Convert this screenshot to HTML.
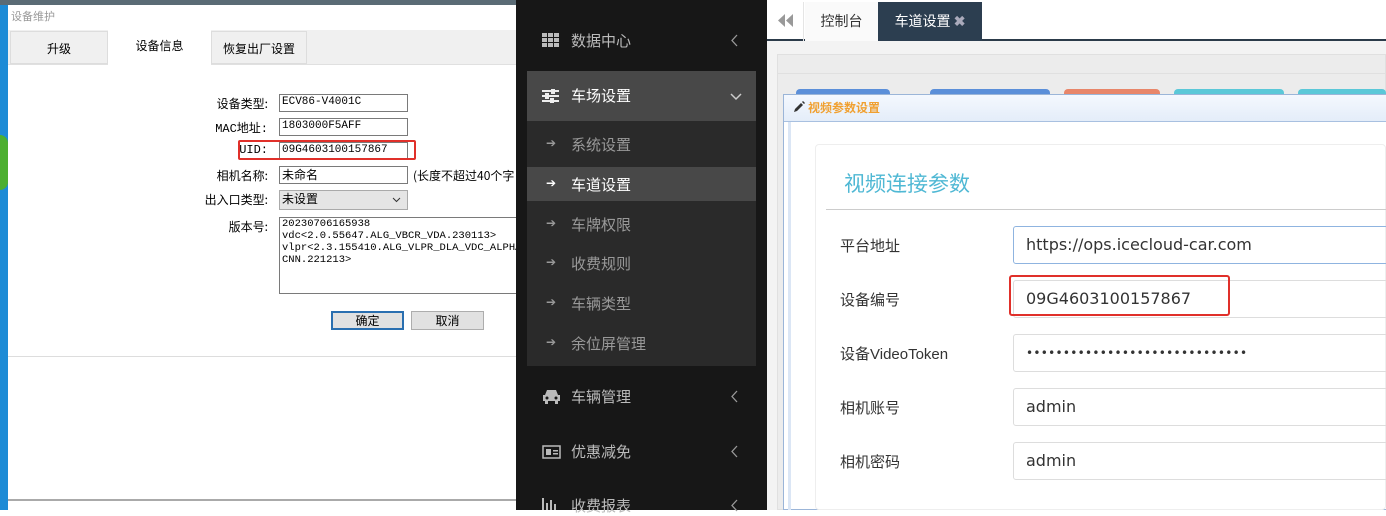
<!DOCTYPE html>
<html><head><meta charset="utf-8"><style>
*{margin:0;padding:0;box-sizing:border-box}
body{width:1386px;height:510px;overflow:hidden;position:relative;background:#fff;font-family:"Liberation Sans","Noto Sans CJK SC",sans-serif}
.a{position:absolute}
.dl{font-family:"Noto Sans CJK SC","Liberation Sans",sans-serif;font-size:12px;color:#000}
.lab{right:0;text-align:right;width:120px}
.inp{border:1px solid #7a7a7a;background:#fff;font-family:"Liberation Mono","Noto Sans CJK SC",monospace;font-size:11px;padding-left:2px;line-height:15px;height:18px}
.sb{color:#bbb;font-size:15px;font-family:"Noto Sans CJK SC",sans-serif}
.sub{color:#999;font-size:15px;font-family:"Noto Sans CJK SC",sans-serif}
.fl{font-size:15px;color:#333;font-family:"Liberation Sans","Noto Sans CJK SC",sans-serif}
.fi{border:1px solid #ddd;border-radius:3px;height:38px;width:380px;font-size:16px;color:#333;padding-left:12px;line-height:36px;font-family:"DejaVu Sans","Liberation Sans",sans-serif}
</style></head><body>
<div class="a" style="left:0;top:0;width:8px;height:510px;background:#1d8bd6"></div>
<div class="a" style="left:0;top:135px;width:8px;height:55px;background:#4caf30;border-radius:0 20px 20px 0"></div>
<div class="a" style="left:0;top:0;width:516px;height:5px;background:#5a6b75"></div>
<div class="a" style="left:8px;top:5px;width:508px;height:496px;background:#fff;border-bottom:2px solid #aaa">
 <div class="a dl" style="left:3px;top:3px;color:#999;font-size:11px">设备维护</div>
 <div class="a" style="left:0;top:25px;width:508px;height:35px;background:#f0f0f0;border-bottom:1px solid #e0e0e0"></div>
 <div class="a dl" style="left:2px;top:26px;width:98px;height:33px;border:1px solid #ddd;text-align:center;line-height:33px;background:#f0f0f0">升级</div>
 <div class="a dl" style="left:100px;top:24px;width:103px;height:37px;background:#fff;text-align:center;line-height:33px">设备信息</div>
 <div class="a dl" style="left:203px;top:26px;width:96px;height:33px;border:1px solid #ddd;text-align:center;line-height:33px;background:#f0f0f0">恢复出厂设置</div>
 <div class="a" style="left:0;top:351px;width:508px;height:1px;background:#ddd"></div>
</div>
<div class="a dl lab" style="left:148px;top:95px">设备类型:</div>
<div class="a dl lab" style="left:148px;top:119px;font-family:'Liberation Mono','Noto Sans CJK SC',monospace">MAC地址:</div>
<div class="a dl lab" style="left:148px;top:143px;font-family:'Liberation Mono','Noto Sans CJK SC',monospace">UID:</div>
<div class="a dl lab" style="left:148px;top:167px">相机名称:</div>
<div class="a dl lab" style="left:148px;top:191px">出入口类型:</div>
<div class="a dl lab" style="left:148px;top:218px">版本号:</div>
<div class="a inp" style="left:279px;top:94px;width:129px">ECV86-V4001C</div>
<div class="a inp" style="left:279px;top:118px;width:129px">1803000F5AFF</div>
<div class="a inp" style="left:279px;top:142px;width:129px">09G4603100157867</div>
<div class="a" style="left:238px;top:140px;width:178px;height:20px;border:2px solid #e0302a;border-radius:2px"></div>
<div class="a inp" style="left:279px;top:166px;width:129px;font-family:'Noto Sans CJK SC',sans-serif;font-size:12px">未命名</div>
<div class="a dl" style="left:413px;top:167px">(长度不超过40个字</div>
<div class="a inp" style="left:279px;top:190px;width:129px;height:20px;background:#e5e5e5;border-color:#aaa;font-family:'Noto Sans CJK SC',sans-serif;font-size:12px">未设置<svg style="position:absolute;right:6px;top:6px" width="9" height="6" stroke="#333" fill="none"><path d="M1 1L4.5 4.5L8 1"/></svg></div>
<div class="a inp" style="left:279px;top:217px;width:240px;height:77px;font-size:10.5px;line-height:12px;white-space:pre">20230706165938
vdc&lt;2.0.55647.ALG_VBCR_VDA.230113&gt;
vlpr&lt;2.3.155410.ALG_VLPR_DLA_VDC_ALPHA_
CNN.221213&gt;</div>
<div class="a dl" style="left:331px;top:311px;width:73px;height:19px;border:2px solid #2a6fb0;background:#e1e1e1;text-align:center;line-height:15px">确定</div>
<div class="a dl" style="left:411px;top:311px;width:73px;height:19px;border:1px solid #adadad;background:#e1e1e1;text-align:center;line-height:17px">取消</div>
<!-- sidebar -->
<div class="a" style="left:516px;top:0;width:251px;height:510px;background:#171717"></div>
<div class="a" style="left:527px;top:71px;width:229px;height:50px;background:#484848"></div>
<div class="a" style="left:527px;top:121px;width:229px;height:245px;background:#2a2a2a"></div>
<div class="a" style="left:527px;top:167px;width:229px;height:34px;background:#484848"></div>
<svg class="a" style="left:542px;top:33px" width="17" height="14" fill="#bbb"><rect x="0" y="0" width="5" height="4"/><rect x="6" y="0" width="5" height="4"/><rect x="12" y="0" width="5" height="4"/><rect x="0" y="5" width="5" height="4"/><rect x="6" y="5" width="5" height="4"/><rect x="12" y="5" width="5" height="4"/><rect x="0" y="10" width="5" height="4"/><rect x="6" y="10" width="5" height="4"/><rect x="12" y="10" width="5" height="4"/></svg>
<div class="a sb" style="left:571px;top:30px">数据中心</div>
<svg class="a" style="left:731px;top:34px" width="7" height="13" stroke="#999" stroke-width="1.3" fill="none"><path d="M6 1L1 6.5L6 12"/></svg>
<svg class="a" style="left:542px;top:89px" width="17" height="14" stroke="#eee" stroke-width="2" fill="#eee"><line x1="0" y1="2" x2="17" y2="2"/><line x1="0" y1="7" x2="17" y2="7"/><line x1="0" y1="12" x2="17" y2="12"/><rect x="10" y="0" width="2" height="4"/><rect x="4" y="5" width="2" height="4"/><rect x="9" y="10" width="2" height="4"/></svg>
<div class="a sb" style="left:571px;top:85px;color:#fff">车场设置</div>
<svg class="a" style="left:730px;top:93px" width="12" height="8" stroke="#ccc" stroke-width="1.5" fill="none"><path d="M1 1L6 6L11 1"/></svg>
<div class="a sub" style="left:546px;top:134px;font-size:12px">➔</div><div class="a sub" style="left:571px;top:134px">系统设置</div>
<div class="a sub" style="left:546px;top:174px;font-size:12px;color:#fff">➔</div><div class="a sub" style="left:571px;top:174px;color:#fff">车道设置</div>
<div class="a sub" style="left:546px;top:214px;font-size:12px">➔</div><div class="a sub" style="left:571px;top:214px">车牌权限</div>
<div class="a sub" style="left:546px;top:253px;font-size:12px">➔</div><div class="a sub" style="left:571px;top:253px">收费规则</div>
<div class="a sub" style="left:546px;top:293px;font-size:12px">➔</div><div class="a sub" style="left:571px;top:293px">车辆类型</div>
<div class="a sub" style="left:546px;top:333px;font-size:12px">➔</div><div class="a sub" style="left:571px;top:333px">余位屏管理</div>
<svg class="a" style="left:542px;top:389px" width="19" height="15" fill="#bbb"><path d="M3 6L5 1H14L16 6H18V12H16V15H13V12H6V15H3V12H1V6Z"/><circle cx="5" cy="9" r="1.5" fill="#171717"/><circle cx="14" cy="9" r="1.5" fill="#171717"/></svg>
<div class="a sb" style="left:571px;top:386px">车辆管理</div>
<svg class="a" style="left:731px;top:390px" width="7" height="13" stroke="#999" stroke-width="1.3" fill="none"><path d="M6 1L1 6.5L6 12"/></svg>
<svg class="a" style="left:542px;top:445px" width="19" height="14"><rect x="1" y="1" width="17" height="12" fill="none" stroke="#bbb" stroke-width="1.5"/><rect x="4" y="4" width="5" height="6" fill="#bbb"/><rect x="11" y="5" width="5" height="1.5" fill="#bbb"/><rect x="11" y="8" width="5" height="1.5" fill="#bbb"/></svg>
<div class="a sb" style="left:571px;top:441px">优惠减免</div>
<svg class="a" style="left:731px;top:445px" width="7" height="13" stroke="#999" stroke-width="1.3" fill="none"><path d="M6 1L1 6.5L6 12"/></svg>
<svg class="a" style="left:542px;top:498px" width="17" height="12" fill="#bbb"><rect x="0" y="0" width="2" height="12"/><rect x="4" y="5" width="2" height="7"/><rect x="8" y="2" width="2" height="10"/><rect x="12" y="6" width="2" height="6"/></svg>
<div class="a sb" style="left:571px;top:495px">收费报表</div>
<svg class="a" style="left:731px;top:499px" width="7" height="13" stroke="#999" stroke-width="1.3" fill="none"><path d="M6 1L1 6.5L6 12"/></svg>
<!-- right pane -->
<div class="a" style="left:767px;top:0;width:619px;height:510px;background:#f3f3f3"></div>
<div class="a" style="left:767px;top:0;width:619px;height:41px;background:#fff;border-bottom:2px solid #2c3b4a"></div>
<div class="a" style="left:767px;top:2px;width:37px;height:39px;border-right:1px solid #e5e5e5"></div>
<svg class="a" style="left:777px;top:14px" width="18" height="13" fill="#999"><path d="M8 0V13L1 6.5Z"/><path d="M16 0V13L9 6.5Z"/></svg>
<div class="a" style="left:805px;top:2px;width:73px;height:39px;background:#fafafa;color:#333;font-size:14px;text-align:center;line-height:39px;font-family:'Noto Sans CJK SC',sans-serif">控制台</div>
<div class="a" style="left:878px;top:2px;width:104px;height:39px;background:#2c3e50;color:#fff;font-size:14px;text-align:center;line-height:39px;font-family:'Noto Sans CJK SC',sans-serif">车道设置 <span style="color:#aab;font-weight:bold">✖</span></div>
<div class="a" style="left:777px;top:54px;width:609px;height:456px;background:#ececec;border:1px solid #e0e0e0"></div>
<div class="a" style="left:777px;top:73px;width:609px;height:1px;background:#e0e0e0"></div>
<div class="a" style="left:796px;top:89px;width:94px;height:8px;background:#5b8fd9;border-radius:4px 4px 0 0"></div>
<div class="a" style="left:930px;top:89px;width:120px;height:8px;background:#5b8fd9;border-radius:4px 4px 0 0"></div>
<div class="a" style="left:1064px;top:89px;width:96px;height:8px;background:#e8866a;border-radius:4px 4px 0 0"></div>
<div class="a" style="left:1174px;top:89px;width:110px;height:8px;background:#5bc8d8;border-radius:4px 4px 0 0"></div>
<div class="a" style="left:1298px;top:89px;width:88px;height:8px;background:#5bc8d8;border-radius:4px 4px 0 0"></div>
<div class="a" style="left:783px;top:94px;width:603px;height:416px;background:#fff;border:1px solid #9bb5d8;border-right:none"></div>
<div class="a" style="left:784px;top:95px;width:602px;height:27px;background:linear-gradient(#f4f8fe,#e4edf9);border-bottom:1px solid #a8c0e0"></div>
<div class="a" style="left:788px;top:122px;width:3px;height:388px;background:#dbe6f5"></div>
<svg class="a" style="left:793px;top:101px" width="12" height="12" fill="#333"><path d="M1 11L2 8L8 2L10 4L4 10Z"/><path d="M9 1L10 0L12 2L11 3Z"/></svg>
<div class="a" style="left:808px;top:99px;font-size:12px;color:#f0a030;font-weight:bold;font-family:'Noto Sans CJK SC',sans-serif">视频参数设置</div>
<div class="a" style="left:815px;top:144px;width:571px;height:366px;background:#fff;border:1px solid #eee;border-radius:4px"></div>
<div class="a" style="left:844px;top:168px;font-size:21px;color:#4fb8d4;font-family:'Noto Sans CJK SC',sans-serif">视频连接参数</div>
<div class="a" style="left:826px;top:209px;width:560px;height:1px;background:#ccc"></div>
<div class="a fl" style="left:840px;top:235px">平台地址</div>
<div class="a fl" style="left:840px;top:289px">设备编号</div>
<div class="a fl" style="left:840px;top:343px">设备VideoToken</div>
<div class="a fl" style="left:840px;top:397px">相机账号</div>
<div class="a fl" style="left:840px;top:451px">相机密码</div>
<div class="a fi" style="left:1013px;top:226px;border-color:#8fb4e0">https://ops.icecloud-car.com</div>
<div class="a fi" style="left:1013px;top:280px">09G4603100157867</div>
<div class="a" style="left:1009px;top:275px;width:221px;height:41px;border:2px solid #e0302a;border-radius:3px"></div>
<div class="a fi" style="left:1013px;top:334px;font-size:12px;letter-spacing:0.3px">••••••••••••••••••••••••••••••</div>
<div class="a fi" style="left:1013px;top:388px">admin</div>
<div class="a fi" style="left:1013px;top:442px">admin</div>
</body></html>
